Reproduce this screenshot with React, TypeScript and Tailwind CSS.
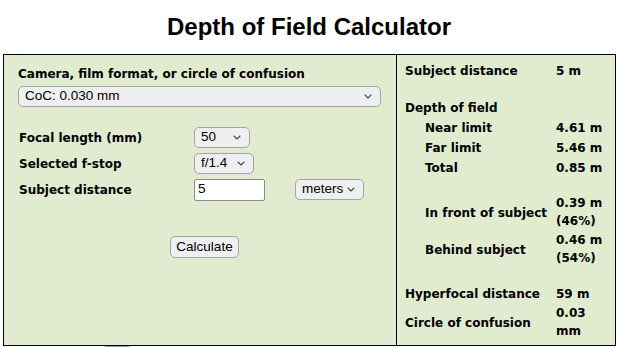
const label = "font-['DejaVu_Sans',Verdana,sans-serif] font-bold text-[12px] leading-[18px] text-black";
const control = "font-['Liberation_Sans',Arial,sans-serif] text-[13.5px] text-black";

function Chevron() {
  return (
    <svg width="8" height="5" viewBox="0 0 8 5" className="shrink-0">
      <path d="M1 1 L4 4 L7 1" fill="none" stroke="#444" strokeWidth="1.1" strokeLinecap="round" strokeLinejoin="round" />
    </svg>
  );
}

function Select({ value, width }: { value: string; width: string }) {
  return (
    <div
      className={`${control} ${width} h-[21px] flex items-center justify-between pl-[6px] pr-[8px] rounded-[5px] border border-[#a4a4a8] bg-[#efeff1]`}
    >
      <span>{value}</span>
      <Chevron />
    </div>
  );
}

function Row({ name, children }: { name: string; children: React.ReactNode }) {
  return (
    <div className="flex items-center h-[21px]">
      <div className={`${label} w-[176px] pl-px`}>{name}</div>
      {children}
    </div>
  );
}

function Result({
  name,
  lines,
  indent,
}: {
  name: string;
  lines: string[];
  indent?: boolean;
}) {
  return (
    <div className={`grid grid-cols-[151px_50px] items-center py-px ${label}`}>
      <div className={indent ? 'pl-[20px]' : ''}>{name}</div>
      <div className={lines.length > 1 ? 'leading-[17.5px]' : ''}>
        {lines.map((l) => (
          <div key={l}>{l}</div>
        ))}
      </div>
    </div>
  );
}

export default function App() {
  return (
    <div className="w-[618px] h-[347px] overflow-hidden bg-white">
      <h1 className="pt-[13px] text-center font-['Liberation_Sans',Arial,sans-serif] text-[24px] leading-[28px] font-bold text-black">
        Depth of Field Calculator
      </h1>
      <div className="mt-[13px] ml-[3px] w-[613px] h-[292px] flex border border-black bg-[#e0ebd0]">
        <div className="w-[393px] border-r border-black pl-[14px] pt-[10px]">
          <div className={label}>Camera, film format, or circle of confusion</div>
          <div className="mt-[3px]">
            <Select value="CoC: 0.030 mm" width="w-[363px]" />
          </div>
          <div className="mt-[20px] flex flex-col gap-[5px]">
            <Row name="Focal length (mm)">
              <Select value="50" width="w-[56px]" />
            </Row>
            <Row name="Selected f-stop">
              <Select value="f/1.4" width="w-[60px]" />
            </Row>
            <Row name="Subject distance">
              <div className={`${control} w-[71px] h-[22px] flex items-center pl-[3px] rounded-[2px] border border-[#8c8c8c] bg-white`}>
                5
              </div>
              <div className="ml-[30px]">
                <Select value="meters" width="w-[69px]" />
              </div>
            </Row>
          </div>
          <button
            className={`${control} mt-[36px] ml-[152px] w-[69px] h-[22px] flex items-center justify-center rounded-[5px] border border-[#a4a4a8] bg-[#efeff1]`}
          >
            Calculate
          </button>
        </div>
        <div className="flex-1 pl-[8px] pt-[6px]">
          <Result name="Subject distance" lines={['5 m']} />
          <div className="mt-[17px]">
            <Result name="Depth of field" lines={['']} />
          </div>
          <Result name="Near limit" lines={['4.61 m']} indent />
          <Result name="Far limit" lines={['5.46 m']} indent />
          <Result name="Total" lines={['0.85 m']} indent />
          <div className="mt-[16px]">
            <Result name="In front of subject" lines={['0.39 m', '(46%)']} indent />
          </div>
          <Result name="Behind subject" lines={['0.46 m', '(54%)']} indent />
          <div className="mt-[16px]">
            <Result name="Hyperfocal distance" lines={['59 m']} />
          </div>
          <Result name="Circle of confusion" lines={['0.03', 'mm']} />
        </div>
      </div>
      <div className="ml-[103px] w-[29px] h-[4px] rounded-t-[4px] border border-[#9a9aa6] bg-[#efeff1]" />
    </div>
  );
}
